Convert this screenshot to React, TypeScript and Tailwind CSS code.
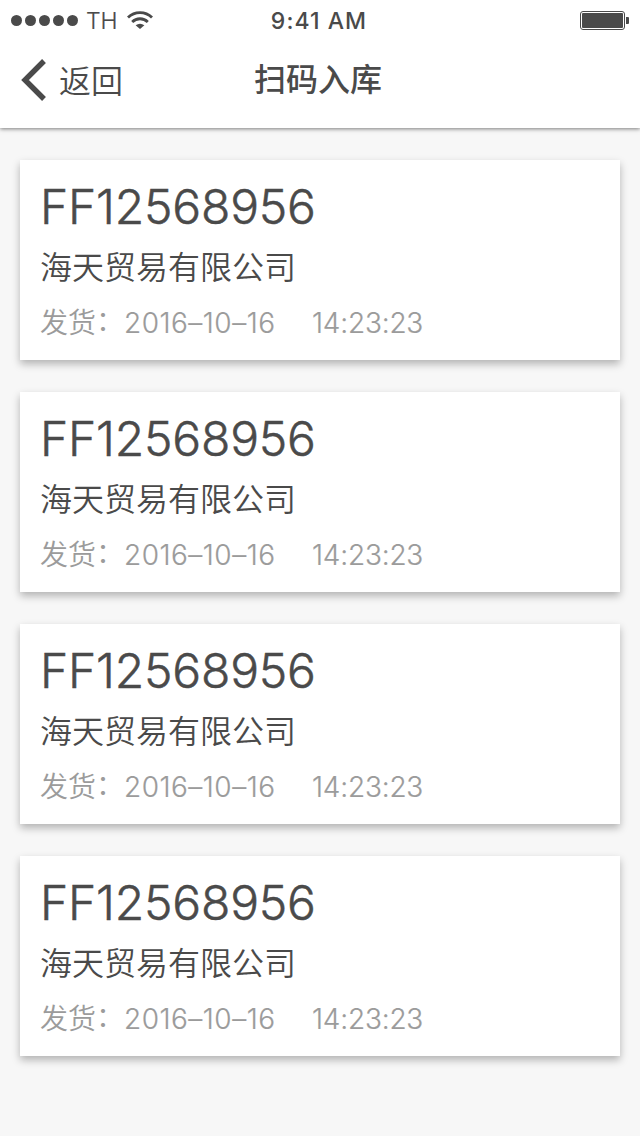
import React from "react";

const dots = [0, 1, 2, 3, 4];
const orders = [0, 1, 2, 3].map((id) => ({
  id,
  code: "FF12568956",
  company: "海天贸易有限公司",
  date: "2016–10–16",
  time: "14:23:23",
}));

export default function App() {
  return (
    <div className="flex h-[1136px] w-[640px] flex-col bg-[#f7f7f7] font-['Inter','Noto_Sans_CJK_SC',sans-serif] text-[#4a4a4a] [font-feature-settings:'calt'_0]">
      <header className="h-32 bg-white shadow-[0_1px_4px_rgba(0,0,0,0.5)]">
        <div className="grid h-10 grid-cols-3 items-center pl-[11px] pr-[11px]">
          <div className="flex items-center">
            <div className="flex gap-[3px]">
              {dots.map((d) => (
                <span key={d} className="size-[11px] rounded-full bg-[#4a4a4a]" />
              ))}
            </div>
            <span className="ml-2 h-10 text-[23px] font-light leading-[42px] [-webkit-text-stroke:0.2px]">TH</span>
            <svg className="ml-[9px]" width="26" height="18" viewBox="0 0 26 18" fill="none" stroke="#4a4a4a" strokeWidth="2.8">
              <path d="M1 6.6a17 17 0 0 1 24 0M5.2 11a11 11 0 0 1 15.6 0" />
              <path d="M13 18l-4.4-3.8a6.8 5.6 0 0 1 8.8 0z" fill="#4a4a4a" stroke="none" />
            </svg>
          </div>
          <span className="h-10 pr-[2px] text-center text-[23px] font-medium leading-[43px] tracking-[1.05px]">9:41 AM</span>
          <svg className="justify-self-end" width="49" height="19" viewBox="0 0 49 19">
            <rect x=".5" y=".5" width="44" height="18" rx="2.5" fill="none" stroke="#4a4a4a" />
            <rect x="2" y="2" width="41" height="15" rx="1" fill="#4a4a4a" />
            <path d="M46 6h2q1 0 1 1v5q0 1-1 1h-2z" fill="#4a4a4a" />
          </svg>
        </div>
        <div className="grid h-20 grid-cols-3 items-center px-5">
          <div className="flex h-12 items-center">
            <svg width="27" height="42" viewBox="0 0 27 42" fill="none" stroke="#4a4a4a" strokeWidth="5.4">
              <path d="M24 2L5 21l19 19" />
            </svg>
            <span className="ml-3 pb-[3px] font-['Noto_Sans_CJK_SC_DemiLight','Noto_Sans_CJK_SC',sans-serif] text-[32px] font-[350]">返回</span>
          </div>
          <h1 className="pr-1 text-center text-[32px] font-medium">扫码入库</h1>
        </div>
      </header>
      <main className="flex flex-col gap-8 px-5 pt-8">
        {orders.map((o) => (
          <article key={o.id} className="h-[200px] bg-white px-5 pt-5 shadow-[0_4px_8px_rgba(0,0,0,0.28)]">
            <h2 className="h-[57px] text-[48px] font-light leading-[54px] tracking-[-0.2px] [-webkit-text-stroke:0.5px]">{o.code}</h2>
            <p className="h-[55px] font-['Noto_Sans_CJK_SC_DemiLight','Noto_Sans_CJK_SC',sans-serif] text-[32px] font-[350] leading-[56px]">{o.company}</p>
            <p className="flex whitespace-nowrap text-[28px] font-light leading-[62px] text-[#9b9b9b]">
              <span className="flex w-[84px] font-['Noto_Sans_CJK_SC_DemiLight','Noto_Sans_CJK_SC',sans-serif] font-[350] leading-[58px]">
                发货<span className="-mt-[2px]">：</span>
              </span>
              <span className="w-[188px] tracking-[0.5px] [-webkit-text-stroke:0.2px]">{o.date}</span>
              <span className="tracking-[-0.2px] [-webkit-text-stroke:0.2px]">{o.time}</span>
            </p>
          </article>
        ))}
      </main>
    </div>
  );
}
